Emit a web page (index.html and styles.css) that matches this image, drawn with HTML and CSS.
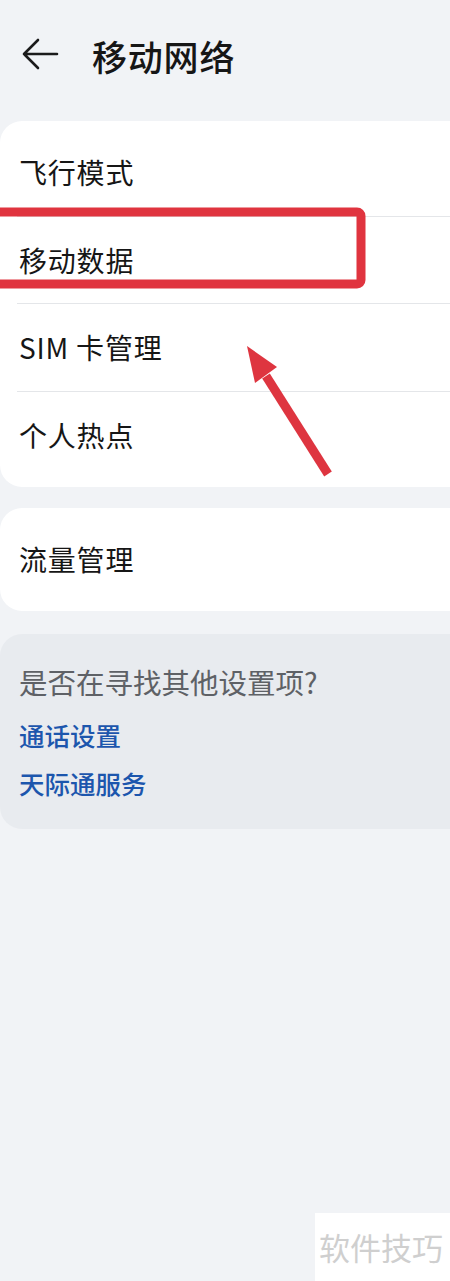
FILE: index.html
```html
<!DOCTYPE html>
<html lang="zh-CN">
<head>
  <meta charset="UTF-8">
  <meta name="viewport" content="width=device-width, initial-scale=1.0">
  <title>移动网络</title>
  <link rel="stylesheet" href="styles.css">
</head>
<body>
  <header class="topbar">
    <svg class="back" width="38" height="32" viewBox="0 0 38 32">
      <path d="M36 16H3M17 2L3 16l14 14" fill="none" stroke="#1b1b1b" stroke-width="2.6" stroke-linecap="round" stroke-linejoin="round"/>
    </svg>
    <h1>移动网络</h1>
  </header>

  <main>
    <section class="card">
      <div class="row">飞行模式</div>
      <div class="row">移动数据</div>
      <div class="row">SIM 卡管理</div>
      <div class="row">个人热点</div>
    </section>

    <section class="card single">
      <div class="row">流量管理</div>
    </section>

    <section class="card hint">
      <p class="question">是否在寻找其他设置项?</p>
      <a class="link">通话设置</a>
      <a class="link">天际通服务</a>
    </section>
  </main>

  <!-- annotation drawn over the screenshot -->
  <svg class="marks" width="450" height="520" viewBox="0 0 450 520">
    <rect x="-10" y="212" width="371" height="72" rx="4" fill="none" stroke="#e0343f" stroke-width="9"/>
    <line x1="328" y1="474" x2="266" y2="376" stroke="#de3540" stroke-width="9" stroke-linecap="butt"/>
    <polygon points="247,346 277,367 255,383" fill="#de3540"/>
  </svg>

  <div class="watermark">软件技巧</div>
</body>
</html>
```

FILE: styles.css
```css
body {
  margin: 0;
  background: #f1f3f6;
  font-family: "Noto Sans CJK SC", "Noto Sans", sans-serif;
  color: #161616;
  width: 450px;
  height: 1281px;
  overflow: hidden;
  position: relative;
}

.topbar {
  display: flex;
  align-items: center;
  height: 110px;
  padding-left: 21px;
}
.back { margin-top: -2px; }
.topbar h1 {
  margin: 0 0 0 33px;
  font-size: 35px;
  font-weight: 500;
  letter-spacing: 0.8px;
}

main {
  display: flex;
  flex-direction: column;
  gap: 21px;
  padding-top: 11px;
}

.card {
  background: #fff;
  border-radius: 22px 0 0 22px;
  padding: 8px 0 9px 19px;
}
.row {
  height: 86.5px;
  display: flex;
  align-items: center;
  font-size: 28px;
  letter-spacing: 0.8px;
  border-top: 1px solid #e4e6e9;
  margin-left: -2px;
  padding-left: 2px;
}
.row:first-child { border-top: none; }

.card.single { padding: 8px 0 8px 19px; }

.card.hint {
  background: #e8ebef;
  padding: 28px 0 18px 19px;
  height: 149px;
  margin-top: 2px;
}
.question {
  margin: 0 0 9px;
  font-size: 28.5px;
  color: #5e6166;
  line-height: 40px;
}
.link {
  display: block;
  font-size: 25.5px;
  font-weight: 500;
  color: #1c56ad;
  line-height: 48px;
}

.marks {
  position: absolute;
  left: 0;
  top: 0;
}

.watermark {
  position: absolute;
  left: 315px;
  top: 1213px;
  width: 135px;
  height: 68px;
  background: #fff;
  color: #cfcfcf;
  font-size: 31px;
  line-height: 68px;
  padding-left: 4px;
  box-sizing: border-box;
}
```
